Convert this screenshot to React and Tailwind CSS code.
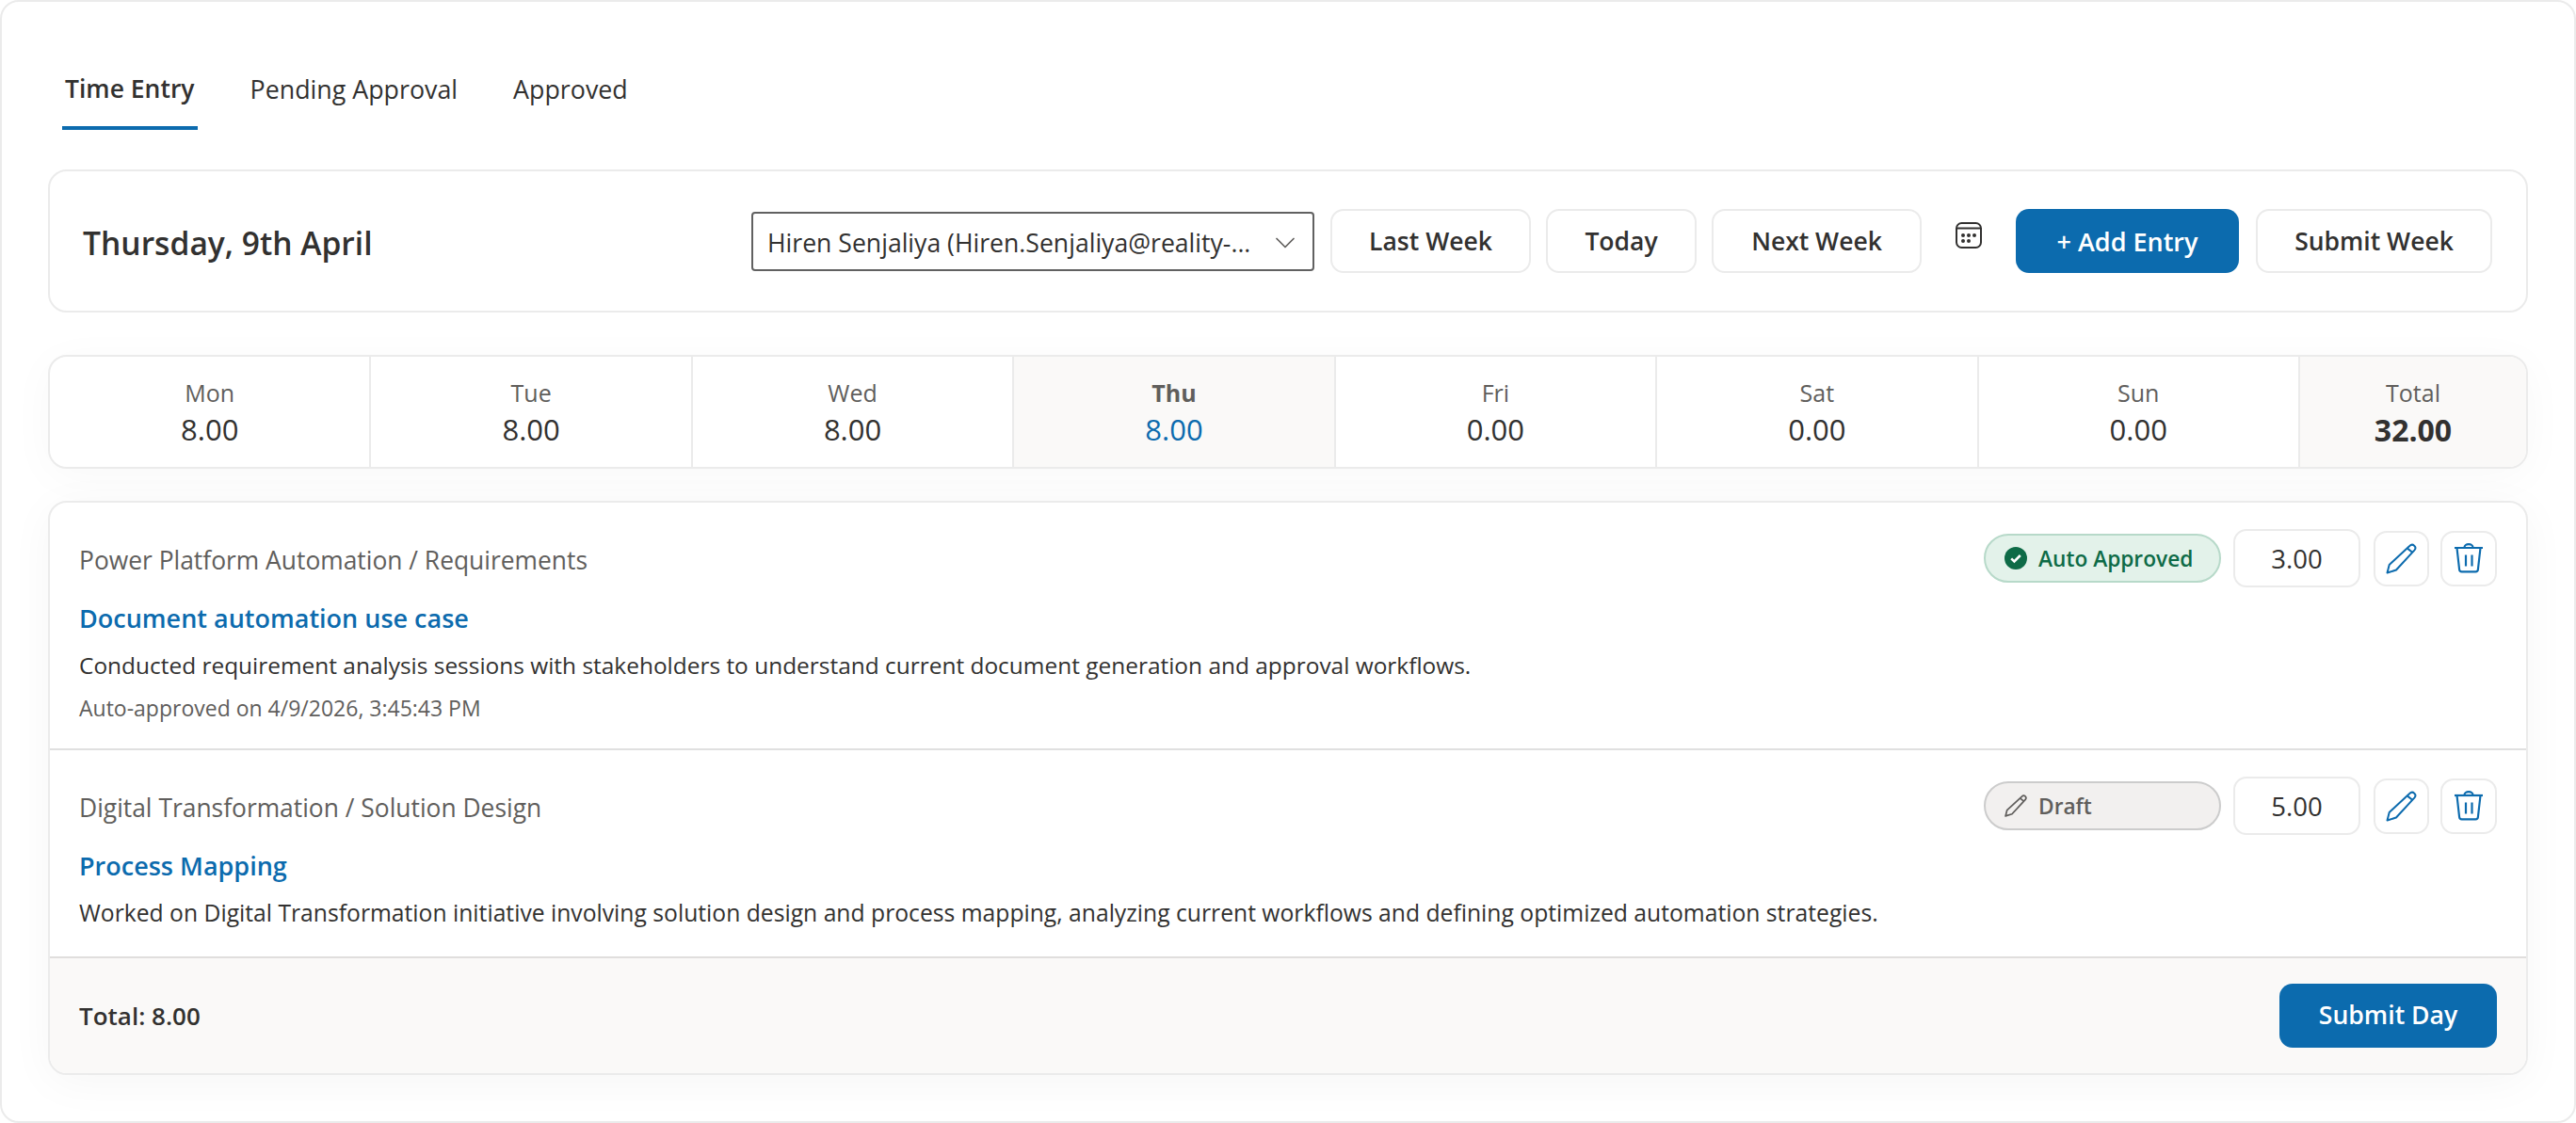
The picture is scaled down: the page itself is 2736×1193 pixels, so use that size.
import React from 'react';
import { ChevronDown } from 'lucide-react';

const days = [
  { label: 'Mon', value: '8.00' },
  { label: 'Tue', value: '8.00' },
  { label: 'Wed', value: '8.00' },
  { label: 'Thu', value: '8.00', active: true },
  { label: 'Fri', value: '0.00' },
  { label: 'Sat', value: '0.00' },
  { label: 'Sun', value: '0.00' },
];

const CalendarIcon = () => (
  <svg width="28" height="28" viewBox="0 0 28 28" fill="none" stroke="#323130" strokeWidth="2">
    <rect x="1" y="1" width="26" height="26" rx="5.5" />
    <path d="M1 6.5h26" />
    <g fill="#323130" stroke="none">
      <circle cx="8" cy="14" r="2" />
      <circle cx="14" cy="14" r="2" />
      <circle cx="20" cy="14" r="2" />
      <circle cx="8" cy="20" r="2" />
      <circle cx="14" cy="20" r="2" />
    </g>
  </svg>
);

const PencilIcon = ({ size = 33, color = '#0c6bae', sw = 2 }) => (
  <svg width={size} height={size} viewBox="0 0 33 33" fill="none" stroke={color} strokeWidth={sw} strokeLinejoin="round">
    <path d="M25.5 2.8a3.4 3.4 0 0 1 5 4.6L11 28.5l-9.5 3 2.2-8.6z" />
    <path d="M23 5.6l5.2 4.2" />
  </svg>
);

const TrashIcon = () => (
  <svg width="30" height="32" viewBox="0 0 30 32" fill="none" stroke="#0c6bae" strokeWidth="2.2">
    <path d="M0 5h30" />
    <path d="M10.5 5V4.5a4.5 3.4 0 0 1 9 0V5" />
    <path d="M2.5 5l2.6 23a2.6 2.6 0 0 0 2.6 2.4h14.6a2.6 2.6 0 0 0 2.6-2.4l2.6-23" />
    <path d="M12 12.5v12M18.5 12.5v12" />
  </svg>
);

const CheckIcon = () => (
  <svg width="24" height="24" viewBox="0 0 24 24">
    <circle cx="12" cy="12" r="12" fill="#0e6b47" />
    <path d="M7.2 12.4l3.2 3L16.8 9" fill="none" stroke="#fff" strokeWidth="2.6" />
  </svg>
);

const OutlineButton = ({ className, children }) => (
  <button className={`flex h-[68px] items-center justify-center rounded-[14px] border-2 border-[#ebebeb] bg-white pt-[2px] text-[26.5px] font-semibold text-[#323130] ${className}`}>
    {children}
  </button>
);

const Entry = ({ project, title, description, descSize, meta, hours, status, className }) => (
  <div className={`px-[31px] ${className}`}>
    <div className="flex h-[62px] items-center">
      <span className="pt-[6px] text-[26.4px] text-[#605e5c]">{project}</span>
      <div className="ml-auto flex items-center">
        {status === 'approved' ? (
          <span className="flex h-[52px] w-[252px] items-center gap-[12px] rounded-full border-2 border-[#b7d9c9] bg-[#e3f2ea] pl-[20px] text-[22.7px] font-semibold text-[#0e6b47]">
            <CheckIcon />
            <span className="pt-[2px]">Auto Approved</span>
          </span>
        ) : (
          <span className="flex h-[52px] w-[252px] items-center gap-[12px] rounded-full border-2 border-[#cccccc] bg-[#f2f0ef] pl-[20px] text-[22.7px] font-semibold text-[#605e5c]">
            <PencilIcon size={24} color="#605e5c" sw={2.4} />
            <span className="pt-[2px]">Draft</span>
          </span>
        )}
        <div className="ml-[13px] flex h-[62px] w-[135px] items-center justify-center rounded-[14px] border-2 border-[#ebebeb] bg-white pt-[2px] text-[27.5px] text-[#323130]">
          {hours}
        </div>
        <button className="ml-[14px] flex h-[59px] w-[59px] items-center justify-center rounded-[14px] border-2 border-[#ebebeb] bg-white">
          <PencilIcon />
        </button>
        <button className="ml-[12px] flex h-[59px] w-[60px] items-center justify-center rounded-[14px] border-2 border-[#ebebeb] bg-white">
          <TrashIcon />
        </button>
      </div>
    </div>
    <div className="mt-[15px] text-[27px] leading-[36px] font-semibold text-[#0c6bae]">{title}</div>
    <div className={`mt-[14px] leading-[36px] text-[#323130] ${descSize}`}>{description}</div>
    {meta && <div className="mt-[11px] text-[23px] leading-[32px] text-[#605e5c]">{meta}</div>}
  </div>
);

export default function App() {
  return (
    <div className="box-border h-[1193px] w-[2736px] overflow-hidden rounded-[20px] border-2 border-[#ebebeb] bg-white pr-[49px] pl-[49px] font-['Open_Sans',sans-serif] text-[#323130]">
      <div className="flex h-[136px] gap-[53px] pl-[15px]">
        <div className="flex items-end border-b-4 border-[#0c6bae] px-[3px] pb-[19px] text-[26.5px] font-semibold">Time Entry</div>
        <div className="flex items-end px-[3px] pb-[23px] text-[26.8px]">Pending Approval</div>
        <div className="flex items-end px-[3px] pb-[23px] text-[26.8px]">Approved</div>
      </div>

      <div className="mt-[42px] flex h-[152px] items-center rounded-[20px] border-2 border-[#ebebeb] bg-white pr-[36px] pl-[35px]">
        <h1 className="mt-[5px] text-[33.6px] font-semibold text-[#323130]">Thursday, 9th April</h1>
        <div className="ml-auto flex items-center">
          <div className="relative flex h-[63px] w-[598px] items-center rounded-[4px] border-2 border-[#616161] pl-[15px] text-[26.6px] whitespace-nowrap">
            <span className="pt-[6px]">Hiren Senjaliya (Hiren.Senjaliya@reality-...</span>
            <ChevronDown className="absolute top-[13px] right-[11px] h-[36px] w-[36px] text-[#605e5c]" strokeWidth={1.1} />
          </div>
          <OutlineButton className="ml-[17px] w-[213px]">Last Week</OutlineButton>
          <OutlineButton className="ml-[16px] w-[160px]">Today</OutlineButton>
          <OutlineButton className="ml-[16px] w-[223px]">Next Week</OutlineButton>
          <span className="mx-[36px] mb-[12px] flex">
            <CalendarIcon />
          </span>
          <button className="flex h-[68px] w-[237px] items-center justify-center rounded-[14px] bg-[#0c6bae] pt-[2px] text-[27px] font-semibold text-white">+ Add Entry</button>
          <OutlineButton className="ml-[18px] w-[251px]">Submit Week</OutlineButton>
        </div>
      </div>

      <div className="mt-[45px] grid h-[121px] grid-cols-[repeat(7,1fr)_240px] overflow-hidden rounded-[20px] border-2 border-[#ebebeb] bg-white shadow-[0_8px_48px_rgba(0,0,0,0.03)]">
        {days.map((day) => (
          <div key={day.label} className={`flex flex-col items-center justify-center border-r-2 border-[#ebebeb] pt-[1px] ${day.active ? 'bg-[#faf9f8]' : ''}`}>
            <span className={`text-[25px] leading-[36px] text-[#605e5c] ${day.active ? 'font-bold' : ''}`}>{day.label}</span>
            <span className={`text-[31px] leading-[43px] font-medium ${day.active ? 'text-[#0c6bae]' : ''}`}>{day.value}</span>
          </div>
        ))}
        <div className="flex flex-col items-center justify-center bg-[#faf9f8] pt-[1px]">
          <span className="text-[25px] leading-[36px] text-[#605e5c]">Total</span>
          <span className="text-[32px] leading-[43px] font-bold">32.00</span>
        </div>
      </div>

      <div className="mt-[34px] h-[610px] overflow-hidden rounded-[20px] border-2 border-[#ebebeb] bg-white shadow-[0_8px_48px_rgba(0,0,0,0.04)]">
        <Entry
          className="h-[263px] border-b-2 border-[#e0e0e0] pt-[28px]"
          project="Power Platform Automation / Requirements"
          title="Document automation use case"
          description="Conducted requirement analysis sessions with stakeholders to understand current document generation and approval workflows."
          descSize="text-[24.45px]"
          meta="Auto-approved on 4/9/2026, 3:45:43 PM"
          hours="3.00"
          status="approved"
        />
        <Entry
          className="h-[219px] pt-[28px]"
          project="Digital Transformation / Solution Design"
          title="Process Mapping"
          description="Worked on Digital Transformation initiative involving solution design and process mapping, analyzing current workflows and defining optimized automation strategies."
          descSize="text-[24.7px]"
          hours="5.00"
          status="draft"
        />
        <div className="flex h-[124px] items-center justify-between border-t-2 border-[#e0dedd] bg-[#faf9f8] pr-[31px] pl-[31px]">
          <span className="text-[26px] font-semibold text-[#323130]">Total: 8.00</span>
          <button className="flex h-[68px] w-[231px] items-center justify-center rounded-[14px] bg-[#0c6bae] text-[26.6px] font-semibold text-white">Submit Day</button>
        </div>
      </div>
    </div>
  );
}
